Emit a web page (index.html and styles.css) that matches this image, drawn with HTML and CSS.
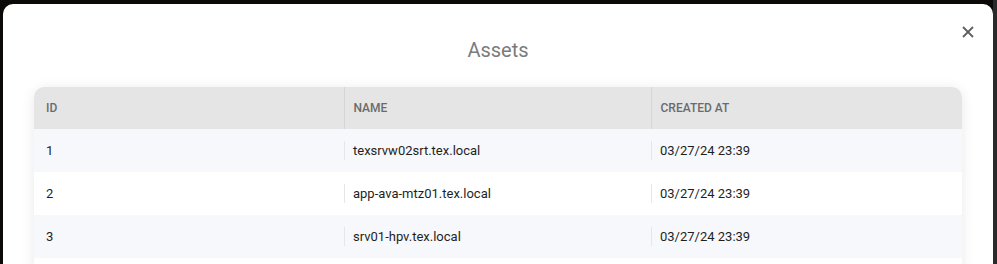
FILE: index.html
```html
<!DOCTYPE html>
<html lang="en">
<head>
    <meta charset="UTF-8">
    <meta name="viewport" content="width=device-width, initial-scale=1.0">
    <title>Assets</title>
    <link rel="stylesheet" href="styles.css">
</head>
<body>
    <div class="backdrop">
        <div class="modal">
            <button class="close-button" aria-label="Close">
                <svg width="12" height="12" viewBox="0 0 12 12" fill="none" stroke="currentColor" stroke-width="1.8">
                    <path d="M1 1l10 10"></path>
                    <path d="M11 1L1 11"></path>
                </svg>
            </button>
            <h2 class="modal-title">Assets</h2>

            <div class="table-wrap">
                <table class="assets-table">
                    <colgroup>
                        <col class="col-id">
                        <col class="col-name">
                        <col>
                    </colgroup>
                    <thead>
                        <tr>
                            <th>ID</th>
                            <th>Name</th>
                            <th>Created At</th>
                        </tr>
                    </thead>
                    <tbody>
                        <tr>
                            <td>1</td>
                            <td>texsrvw02srt.tex.local</td>
                            <td>03/27/24 23:39</td>
                        </tr>
                        <tr>
                            <td>2</td>
                            <td>app-ava-mtz01.tex.local</td>
                            <td>03/27/24 23:39</td>
                        </tr>
                        <tr>
                            <td>3</td>
                            <td>srv01-hpv.tex.local</td>
                            <td>03/27/24 23:39</td>
                        </tr>
                    </tbody>
                </table>
            </div>
        </div>
    </div>
</body>
</html>
```

FILE: styles.css
```css
body {
    margin: 0;
    padding: 0;
    font-family: Roboto, "Liberation Sans", Arial, sans-serif;
    background-color: #0c0a08;
    height: 100vh;
    overflow: hidden;
}

.backdrop {
    height: 100%;
    padding: 4px 4px 0 3px;
    box-sizing: border-box;
    background: linear-gradient(to right, #0c0a08 0, #0c0a08 993px, #2a2a2a 993px);
}

.modal {
    position: relative;
    background-color: #ffffff;
    border-radius: 10px 10px 0 0;
    padding: 30px 31px 0 31px;
    height: 100%;
    box-sizing: border-box;
}

.modal-title {
    margin: 0 0 20px 0;
    text-align: center;
    font-size: 20px;
    font-weight: 400;
    color: #7b7b7b;
    line-height: 33px;
}

.close-button {
    position: absolute;
    top: 17px;
    right: 14px;
    width: 22px;
    height: 22px;
    padding: 0;
    border: none;
    background: transparent;
    color: #5f5f5f;
    cursor: pointer;
    display: flex;
    justify-content: center;
    align-items: center;
}

.table-wrap {
    background-color: #ffffff;
    padding-bottom: 40px;
    border-radius: 10px 10px 0 0;
    overflow: hidden;
    box-shadow: 0 2px 14px rgba(0, 0, 0, 0.09);
}

.assets-table {
    width: 100%;
    border-collapse: collapse;
    table-layout: fixed;
}

.col-id {
    width: 310px;
}

.col-name {
    width: 307px;
}

.assets-table th {
    height: 42px;
    padding: 0 9px;
    background-color: #e5e5e5;
    color: #6b6b6b;
    font-size: 12px;
    font-weight: 500;
    text-transform: uppercase;
    text-align: left;
    border-left: 1px solid #d6d6d6;
}

.assets-table td {
    position: relative;
    height: 43px;
    padding: 0 9px;
    font-size: 13px;
    color: #1f1f1f;
}

.assets-table th:first-child,
.assets-table td:first-child {
    border-left: none;
    padding-left: 12px;
}

/* short divider between body cells */
.assets-table td + td::before {
    content: "";
    position: absolute;
    left: 0;
    top: 12px;
    bottom: 12px;
    border-left: 1px solid #e6e6e6;
}

.assets-table tbody tr:nth-child(odd) {
    background-color: #f7f8fb;
}
```
